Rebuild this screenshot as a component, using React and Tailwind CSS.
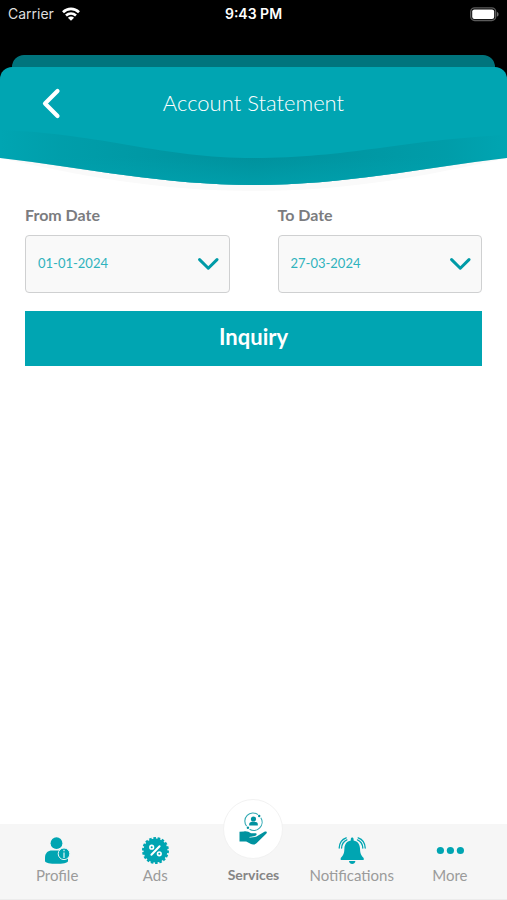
import React, { useState } from "react";

const WifiIcon = () => (
  <svg className="w-[18px] h-[14px]" viewBox="0 0 18 14" fill="none" stroke="white" strokeWidth="2.7">
    <path d="M1 5.2C5.6 .8 12.4 .8 17 5.2" />
    <path d="M4 8.6C7 5.9 11 5.9 14 8.6" />
    <path d="M9 13.8 5.9 10.8C7.6 9.2 10.4 9.2 12.1 10.8Z" fill="white" stroke="none" />
  </svg>
);

const BatteryIcon = () => (
  <svg className="w-[31px] h-[15px]" viewBox="0 0 31 15" fill="none">
    <rect x="2.7" y=".9" width="25" height="12.6" rx="4" stroke="#5b5b5b" strokeWidth="1.4" />
    <rect x="4.2" y="2.4" width="22" height="9.6" rx="2.2" fill="white" />
    <path d="M29 5C31.1 5.6 31.1 9 29 9.6Z" fill="#6b6b6b" />
  </svg>
);

const ProfileIcon = () => (
  <svg className="w-7 h-7" viewBox="0 0 28 28" fill="#00a5b2">
    <circle cx="13.5" cy="6.2" r="5.9" />
    <path d="M2 24V20.5C2 16 5 13.4 9 13.4H17C22 13.4 25 16 25 20.5V24C25 27.8 2 27.8 2 24Z" />
    <circle cx="21" cy="16.8" r="5.8" stroke="#e8f7f8" strokeWidth="1" />
    <path d="M21 12.8V14.2M21 15.4V21" stroke="#e8f7f8" strokeWidth="1.2" />
  </svg>
);

const AdsIcon = () => (
  <svg className="w-7 h-7" viewBox="0 0 28 28" fill="none">
    <circle cx="14.5" cy="13.5" r="12" fill="#00a5b2" />
    <circle
      cx="14.5"
      cy="13.5"
      r="12.3"
      stroke="#00a5b2"
      strokeWidth="2.4"
      pathLength="90"
      strokeDasharray="3 2"
    />
    <path d="M10.4 17.8 18.6 9.2" stroke="white" strokeWidth="2" strokeLinecap="round" />
    <circle cx="10.7" cy="10.2" r="1.8" stroke="white" strokeWidth="1.6" />
    <circle cx="18.3" cy="16.8" r="1.8" stroke="white" strokeWidth="1.6" />
  </svg>
);

const ServicesIcon = () => (
  <svg className="w-[30px] h-[34px]" viewBox="0 0 30 34" fill="#00929f">
    <g fill="none" stroke="#30a9b3" strokeWidth="1.1">
      <path d="M8.6 14.2A8.2 8.2 0 0 1 20 2.6" />
      <path d="M22.8 5.8A8.2 8.2 0 0 1 11.6 17.2" />
    </g>
    <circle cx="21.2" cy="4" r="1.2" />
    <circle cx="9.9" cy="15.8" r="1.2" />
    <circle cx="15.5" cy="7" r="2.6" />
    <path d="M11.2 13.5V12C11.2 10.2 13 9.7 15.5 9.7S19.8 10.2 19.8 12V13.5Z" />
    <path d="M1.5 19.8 6 19.4C9 19 11 20 13 21.3H17C19 21.3 19.4 22.8 18 23.6L13.5 25 18.5 24.4 26.4 19.8C28 19 29.6 19.8 28.4 21.4L18.5 31.3C17 32.7 14.5 32.8 13 32.1L8.2 29.6 1.5 29.4Z" />
    <path d="M11.5 25.4 17.5 24.4C19 23.8 19.4 22.8 18.8 21.9" fill="none" stroke="white" strokeWidth=".7" />
  </svg>
);

const BellIcon = () => (
  <svg className="w-7 h-7" viewBox="0 0 28 28" fill="#00a5b2">
    <path d="M12.8 2.2C12.8 -.2 15.6 -.2 15.6 2.2V3.4C20 4.2 21.8 7.4 22 11.4C22.2 16.4 22.9 18 25.7 21V23H2.7V21C5.5 18 6.2 16.4 6.4 11.4C6.6 7.4 8.4 4.2 12.8 3.4Z" />
    <path d="M11 24H17.4C17.2 27.9 11.2 27.9 11 24Z" />
    <g fill="none" stroke="#00a5b2" strokeWidth="1.3" strokeLinecap="round">
      <path d="M1.2 11C1.4 6 3.9 2.3 8.2 .8" />
      <path d="M3.6 11C3.8 7 5.6 4.2 8.9 2.8" />
      <path d="M27.2 11C27 6 24.5 2.3 20.2 .8" />
      <path d="M24.8 11C24.6 7 22.8 4.2 19.5 2.8" />
    </g>
  </svg>
);

const MoreIcon = () => (
  <svg className="w-7 h-7" viewBox="0 0 28 28" fill="#00a5b2">
    <circle cx="4.4" cy="13.5" r="3.6" />
    <circle cx="14.4" cy="13.5" r="3.6" />
    <circle cx="24.4" cy="13.5" r="3.6" />
  </svg>
);

const StatusBar = () => (
  <div className="grid grid-cols-3 items-center h-7 px-2 font-['Inter',sans-serif] text-sm text-white">
    <div className="flex items-center gap-2">
      <span className="text-[#dedede]">Carrier</span>
      <WifiIcon />
    </div>
    <span className="text-center font-semibold">9:43 PM</span>
    <div className="flex justify-end">
      <BatteryIcon />
    </div>
  </div>
);

const HeaderWave = () => (
  <svg className="block w-full h-16" viewBox="0 0 507 64" preserveAspectRatio="none">
    <defs>
      <linearGradient id="shade" x1="0" x2="1" y1="0" y2="0">
        <stop offset="0" stopColor="#008e99" stopOpacity="0" />
        <stop offset=".12" stopColor="#008e99" stopOpacity=".3" />
        <stop offset=".5" stopColor="#008e99" stopOpacity=".85" />
        <stop offset=".88" stopColor="#008e99" stopOpacity=".35" />
        <stop offset="1" stopColor="#008e99" stopOpacity="0" />
      </linearGradient>
      <linearGradient id="lift" x1="0" x2="0" y1="0" y2="1">
        <stop offset=".5" stopColor="#00a5b2" stopOpacity="0" />
        <stop offset="1" stopColor="#00a5b2" stopOpacity=".6" />
      </linearGradient>
    </defs>
    <rect width="507" height="64" fill="white" />
    <path d="M0 28H507C430 45 350 61 254 61S77 45 0 28Z" fill="#fafafa" />
    <path d="M0 0H507V28C420 38 345 55 254 55S87 38 0 28Z" fill="#00a5b2" />
    <path
      d="M0 0C105 4 160 28 254 28S402 10 507 5V28C420 38 345 55 254 55S87 38 0 28Z"
      fill="url(#shade)"
    />
    <path
      d="M0 0C105 4 160 28 254 28S402 10 507 5V28C420 38 345 55 254 55S87 38 0 28Z"
      fill="url(#lift)"
    />
  </svg>
);

const Header = () => (
  <header className="bg-black">
    <StatusBar />
    <div className="mx-3 mt-[27px] h-3 rounded-t-xl bg-[#00747d]" />
    <div className="overflow-hidden rounded-t-xl bg-[#00a5b2]">
      <div className="grid grid-cols-[48px_1fr_48px] items-center h-[63px] px-7 pt-2">
        <button className="flex justify-center" aria-label="Back">
          <svg
            className="w-5 h-8"
            viewBox="0 0 20 32"
            fill="none"
            stroke="white"
            strokeWidth="4.2"
            strokeLinecap="round"
            strokeLinejoin="round"
          >
            <path d="M15.5 4 3 16.5 15.5 29" />
          </svg>
        </button>
        <h1 className="text-center text-[22px] font-light text-white">
          Account Statement
        </h1>
      </div>
      <HeaderWave />
    </div>
  </header>
);

const DateField = ({ id, label, value, onChange, options }) => (
  <div className="flex-1">
    <label htmlFor={id} className="block text-base leading-5 font-bold text-[#7b7c7f]">
      {label}
    </label>
    <div className="relative mt-[10px]">
      <select
        id={id}
        value={value}
        onChange={(e) => onChange(e.target.value)}
        className="block w-full h-[58px] px-3 appearance-none rounded-sm border border-[#cfd0d1] bg-[#f9f9f9] text-[13px] text-[#2fb3bd]"
      >
        {options.map((option) => (
          <option key={option}>{option}</option>
        ))}
      </select>
      <svg
        className="absolute right-2.5 top-5 w-[22px] h-4 pointer-events-none"
        viewBox="0 0 22 16"
        fill="none"
        stroke="#009ba7"
        strokeWidth="3"
        strokeLinecap="round"
        strokeLinejoin="round"
      >
        <path d="M1.6 4.6 10.3 13.2 19 4.6" />
      </svg>
    </div>
  </div>
);

const tabs = [
  { name: "Profile", icon: <ProfileIcon /> },
  { name: "Ads", icon: <AdsIcon /> },
  { name: "Services", icon: <ServicesIcon />, active: true },
  { name: "Notifications", icon: <BellIcon /> },
  { name: "More", icon: <MoreIcon /> },
];

const TabBar = () => (
  <nav className="grid grid-cols-5 grid-rows-1 h-[76px] px-2 bg-[#f6f6f6] border-b border-[#ececec]">
    {tabs.map((tab) => (
      <a
        key={tab.name}
        href={`#${tab.name.toLowerCase()}`}
        className="flex flex-col items-center justify-end min-h-0 pb-3.5"
      >
        {tab.active ? (
          <span className="flex shrink-0 items-center justify-center size-[60px] mb-1.5 rounded-full border border-[#f2f2f2] bg-white">
            {tab.icon}
          </span>
        ) : (
          tab.icon
        )}
        <span
          className={
            tab.active
              ? "text-sm leading-5 font-bold text-[#858585]"
              : "text-[15px] leading-5 text-[#9b9b9b]"
          }
        >
          {tab.name}
        </span>
      </a>
    ))}
  </nav>
);

const App = () => {
  const [fromDate, setFromDate] = useState("01-01-2024");
  const [toDate, setToDate] = useState("27-03-2024");

  return (
    <div className="flex flex-col min-h-screen bg-white font-['Lato',sans-serif]">
      <Header />
      <main className="flex-1 px-[25px] pt-[11px]">
        <form onSubmit={(e) => e.preventDefault()}>
          <div className="flex gap-12">
            <DateField
              id="from-date"
              label="From Date"
              value={fromDate}
              onChange={setFromDate}
              options={["01-01-2024", "01-02-2024", "01-03-2024"]}
            />
            <DateField
              id="to-date"
              label="To Date"
              value={toDate}
              onChange={setToDate}
              options={["27-01-2024", "27-02-2024", "27-03-2024"]}
            />
          </div>
          <button className="mt-[18px] w-full h-[55px] pb-1 bg-[#00a5b2] text-[22px] font-bold text-white">
            Inquiry
          </button>
        </form>
      </main>
      <TabBar />
    </div>
  );
};

export default App;
